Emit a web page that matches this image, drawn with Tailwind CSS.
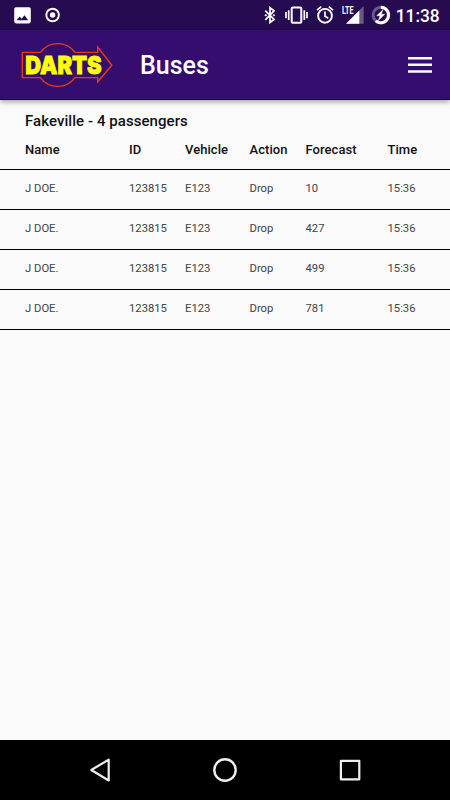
<!DOCTYPE html>
<html lang="en">
<head>
  <meta charset="UTF-8">
  <meta name="viewport" content="width=device-width, initial-scale=1.0">
  <title>Buses</title>
  <script src="https://cdn.jsdelivr.net/npm/@tailwindcss/browser@4"></script>
</head>
<body class="bg-black font-['Roboto',sans-serif]">
  <div class="w-[450px] h-[800px] flex flex-col overflow-hidden bg-[#fafafa]">

    <!-- Status bar -->
    <div class="h-[30px] shrink-0 bg-[#260b50] flex items-center justify-between pl-[14px] pr-[10px] text-white">
      <div class="flex items-center gap-[14px]">
        <svg class="w-[17px] h-[17px]" viewBox="0 0 17 17">
          <path fill="#fff" fill-rule="evenodd" d="M2 .2h13a1.8 1.8 0 0 1 1.8 1.8v12.6a1.8 1.8 0 0 1-1.8 1.8H2a1.8 1.8 0 0 1-1.8-1.8V2A1.8 1.8 0 0 1 2 .2zM2.6 13.2h11.6l-3.7-5-2.9 3.6-2-2.4z"/>
        </svg>
        <svg class="w-4 h-4" viewBox="0 0 16 16">
          <circle cx="7.6" cy="8" r="6.3" fill="none" stroke="#fff" stroke-width="1.9"/>
          <circle cx="7.6" cy="8" r="2.7" fill="#fff"/>
        </svg>
      </div>
      <svg class="w-[180px] h-[30px]" viewBox="260 0 180 30">
        <!-- bluetooth -->
        <path d="M265.3 10.6l8.8 8.9-4.1 3V7.8l4.1 3.1-8.8 8.9" fill="none" stroke="#fff" stroke-width="1.7"/>
        <path d="M264.3 15.2l1.6-1.2 1.2 1.2-1.2 1.2zM272.6 15.2l1.3-1.2 1.3 1.2-1.3 1.2z" fill="#fff"/>
        <!-- vibrate -->
        <rect x="291.7" y="7.5" width="9.6" height="15.2" rx="1" fill="none" stroke="#fff" stroke-width="2"/>
        <path d="M288.7 10.3v9.6M304.3 10.3v9.6M286 12v6.2M307 12v6.2" stroke="#fff" stroke-width="1.7"/>
        <!-- alarm -->
        <circle cx="325" cy="15.8" r="6.9" fill="none" stroke="#fff" stroke-width="1.9"/>
        <path d="M325 11.5v4.8l3.3 2M317 10.2l4.2-3.5M333 10.2l-4.2-3.5" fill="none" stroke="#fff" stroke-width="1.7"/>
        <!-- signal -->
        <path d="M363.6 6v17.8H346z" fill="#6b5a89"/>
        <path d="M359.3 10.4v13.4H346z" fill="#fff"/>
        <path d="M340 5h14.6v8.8l-2 2H340z" fill="#260b50"/>
        <text x="342" y="14" font-family="Roboto" font-size="11" font-weight="700" fill="#fff" textLength="11.6" lengthAdjust="spacingAndGlyphs">LTE</text>
        <!-- battery -->
        <circle cx="380.8" cy="15" r="7.7" fill="none" stroke="#6b5a89" stroke-width="3"/>
        <path d="M380.8 7.3a7.7 7.7 0 1 1-5 13.5" fill="none" stroke="#fff" stroke-width="3"/>
        <path d="M383 9.7l-6.3 6h3.4l-1.8 4.9 6.4-6.3h-3.5z" fill="#fff" stroke="#fff" stroke-width=".5"/>
        <text x="395.7" y="21.8" font-family="Roboto" font-size="18" font-weight="500" fill="#fff" textLength="44" lengthAdjust="spacingAndGlyphs">11:38</text>
      </svg>
    </div>

    <!-- App bar -->
    <header class="relative z-10 h-[70px] shrink-0 bg-[#340d6e] border-b border-[#170650] shadow-[0_2px_5px_rgba(0,0,0,0.35)] flex items-center pl-5 pr-[18px]">
      <svg class="w-[96px] h-[50px]" viewBox="20 40 96 50">
        <path d="M22.3 52.4H40.4A21.5 21.5 0 0 1 75 52.4H97.7V47L111.9 65.2 97.7 81.8V77.6H75A21.5 21.5 0 0 1 40.4 77.6H22.3z" fill="none" stroke="#ea3a0c" stroke-width="1.4"/>
        <text x="25.2" y="74" font-family="Inter" font-size="25" font-weight="900" fill="#ffff08" stroke="#ffff08" stroke-width=".8" textLength="76.5" lengthAdjust="spacingAndGlyphs">DARTS</text>
      </svg>
      <h1 class="ml-6 pt-0.5 text-[25px] leading-[30px] font-medium text-white">Buses</h1>
      <svg class="ml-auto w-6 h-4" viewBox="0 0 24 16">
        <path d="M0 1.3h24M0 7.8h24M0 14.4h24" stroke="#fff" stroke-width="2.5"/>
      </svg>
    </header>

    <!-- Passenger list -->
    <main class="flex-1 text-[#111]">
      <h2 class="h-[42px] pl-[25px] pt-[11px] text-[15px] leading-5 font-medium tracking-[0.06px]">Fakeville - 4 passengers</h2>
      <div class="h-7 grid grid-cols-[104px_56px_64.5px_56px_82px_1fr] pl-[25px] border-b border-black text-[13px] leading-[15px] font-medium tracking-[0.06px]">
        <span>Name</span><span>ID</span><span>Vehicle</span><span>Action</span><span>Forecast</span><span>Time</span>
      </div>
      <div id="rows"></div>
    </main>

    <!-- Navigation bar -->
    <nav class="h-[60px] shrink-0 bg-black flex items-center justify-between pl-[87px] pr-[87px]">
      <svg class="w-[26px] h-[26px]" viewBox="0 0 26 26" fill="none" stroke="#eee" stroke-width="2.2" stroke-linejoin="round">
        <path d="M21.7 2.6v20.9L4.3 13z"/>
      </svg>
      <svg class="w-[26px] h-[26px]" viewBox="0 0 26 26" fill="none" stroke="#eee" stroke-width="2.4">
        <circle cx="13" cy="13" r="10.7"/>
      </svg>
      <svg class="w-[26px] h-[26px]" viewBox="0 0 26 26" fill="none" stroke="#eee" stroke-width="2.2" stroke-linejoin="round">
        <rect x="3.9" y="3.9" width="18.4" height="18.4"/>
      </svg>
    </nav>
  </div>

  <script>
    const passengers = [
      ["J DOE.", "123815", "E123", "Drop", "10", "15:36"],
      ["J DOE.", "123815", "E123", "Drop", "427", "15:36"],
      ["J DOE.", "123815", "E123", "Drop", "499", "15:36"],
      ["J DOE.", "123815", "E123", "Drop", "781", "15:36"],
    ];

    document.getElementById("rows").innerHTML = passengers.map(p => `
      <div class="h-10 grid grid-cols-[104px_56px_64.5px_56px_82px_1fr] pl-[25px] pt-[11px] border-b border-black text-[11.25px] leading-[15px] text-[#444]">
        ${p.map(cell => `<span>${cell}</span>`).join("")}
      </div>
    `).join("");
  </script>
</body>
</html>
